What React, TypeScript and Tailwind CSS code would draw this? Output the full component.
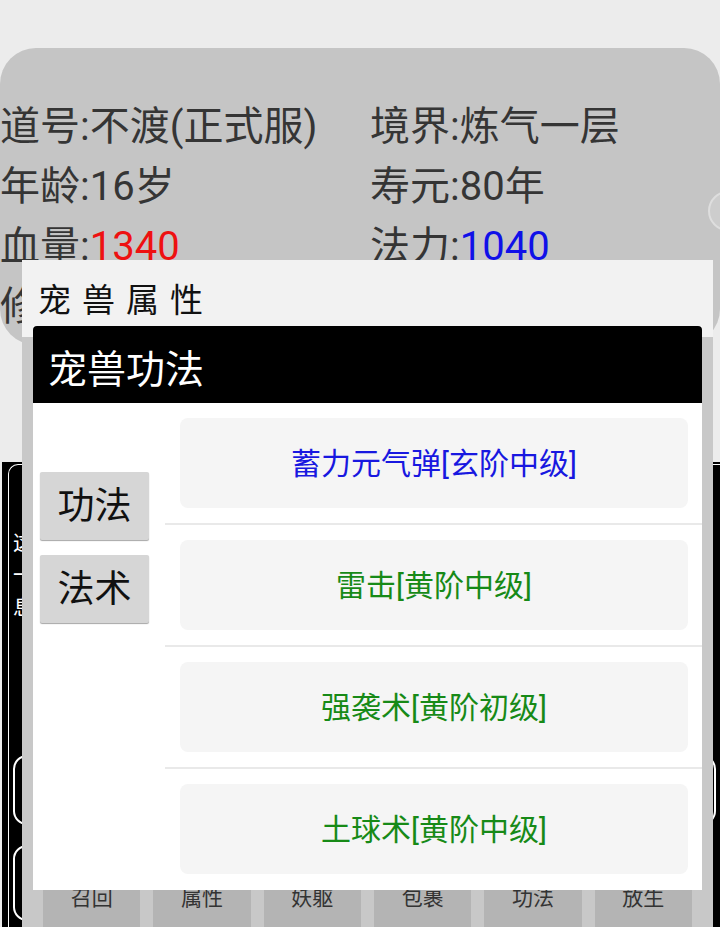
const stats = [
  { label: '道号:', value: '不渡(正式服)', color: '', label2: '境界:', value2: '炼气一层', color2: '' },
  { label: '年龄:', value: '16岁', color: '', label2: '寿元:', value2: '80年', color2: '' },
  { label: '血量:', value: '1340', color: 'text-[#ee1111]', label2: '法力:', value2: '1040', color2: 'text-[#1010e8]' },
  { label: '修为:', value: '0', color: '', label2: '灵石:', value2: '0', color2: '' },
]

const skills = [
  { name: '蓄力元气弹[玄阶中级]', color: 'text-[#1818e0]' },
  { name: '雷击[黄阶中级]', color: 'text-[#178a17]' },
  { name: '强袭术[黄阶初级]', color: 'text-[#178a17]' },
  { name: '土球术[黄阶中级]', color: 'text-[#178a17]' },
]

const petActions = ['召回', '属性', '妖躯', '包裹', '功法', '放生']

export default function App() {
  return (
    <div className="relative w-[720px] h-[927px] overflow-hidden bg-[#ececec] font-[Roboto,'Noto_Sans_CJK_SC',sans-serif]">
      {/* character card */}
      <div className="pt-[48px]">
        <div className="h-[297px] rounded-[36px] bg-[#c5c5c5] pt-[49px] text-[40px] text-[#353535]">
          {stats.map((s) => (
            <div key={s.label} className="grid grid-cols-[370px_1fr] h-[60px] leading-[60px] whitespace-nowrap">
              <div>
                {s.label}
                <span className={s.color}>{s.value}</span>
              </div>
              <div>
                {s.label2}
                <span className={s.color2}>{s.value2}</span>
              </div>
            </div>
          ))}
        </div>
      </div>

      {/* black panel behind */}
      <div className="mt-[117px] ml-[2px] w-[740px] h-[470px] bg-black pl-[6px] pt-[2px]">
        <div className="h-full rounded-tl-[10px] border-l border-t border-white pl-[4px] pt-[62px] text-white text-[21px] leading-[32px]">
          <div>这</div>
          <div>一</div>
          <div>息</div>
          <div className="mt-[132px] mr-[26px] h-[70px] rounded-[14px] border-2 border-white" />
          <div className="mt-[20px] mr-[140px] h-[76px] rounded-[14px] border-2 border-white" />
        </div>
      </div>

      {/* toggle at the card edge */}
      <div className="absolute left-[708px] top-[191px] w-[40px] h-[40px] rounded-full bg-[#cdcdcd] border-2 border-[#dedede]" />

      {/* 宠兽属性 dialog */}
      <div className="absolute left-[22px] top-[260px] w-[691px] bottom-0 flex flex-col">
        <div className="h-[77px] bg-[#f2f2f2] pl-[16px] pt-[21px] text-[33px] leading-[40px] tracking-[11px] text-[#111]">
          宠兽属性
        </div>
        <div className="flex-1 flex flex-col bg-[#c8c8c8]">
          <div className="mt-auto grid grid-cols-6 gap-[13px] px-[21px]">
            {petActions.map((a) => (
              <div key={a} className="h-[50px] bg-[#b4b4b4] pt-[7px] text-center text-[21px] leading-[28px] text-[#333]">
                {a}
              </div>
            ))}
          </div>
        </div>
      </div>

      {/* 宠兽功法 dialog */}
      <div className="absolute left-[33px] top-[326px] w-[669px] h-[564px] flex flex-col bg-white">
        <div className="h-[77px] shrink-0 rounded-t-[4px] bg-black pl-[15px] pt-[20px] text-[39px] leading-[48px] text-white">
          宠兽功法
        </div>
        <div className="flex flex-1">
          <div className="w-[132px] shrink-0 pl-[7px] pt-[69px] flex flex-col gap-[15px]">
            {['功法', '法术'].map((t) => (
              <div
                key={t}
                className="w-[109px] h-[68px] rounded-[2px] bg-[#d6d6d6] shadow-[0_1px_1px_rgba(0,0,0,0.35)] text-center text-[37px] leading-[70px] text-[#111]"
              >
                {t}
              </div>
            ))}
          </div>
          <div className="flex-1 flex flex-col">
            {skills.map((s, i) => (
              <div
                key={s.name}
                className={`pl-[15px] pr-[14px] py-[15px] ${i < skills.length - 1 ? 'border-b-2 border-[#e9e9e9]' : ''}`}
              >
                <div className={`h-[90px] rounded-[8px] bg-[#f5f5f5] flex items-center justify-center text-[30px] ${s.color}`}>
                  {s.name}
                </div>
              </div>
            ))}
          </div>
        </div>
      </div>
    </div>
  )
}
